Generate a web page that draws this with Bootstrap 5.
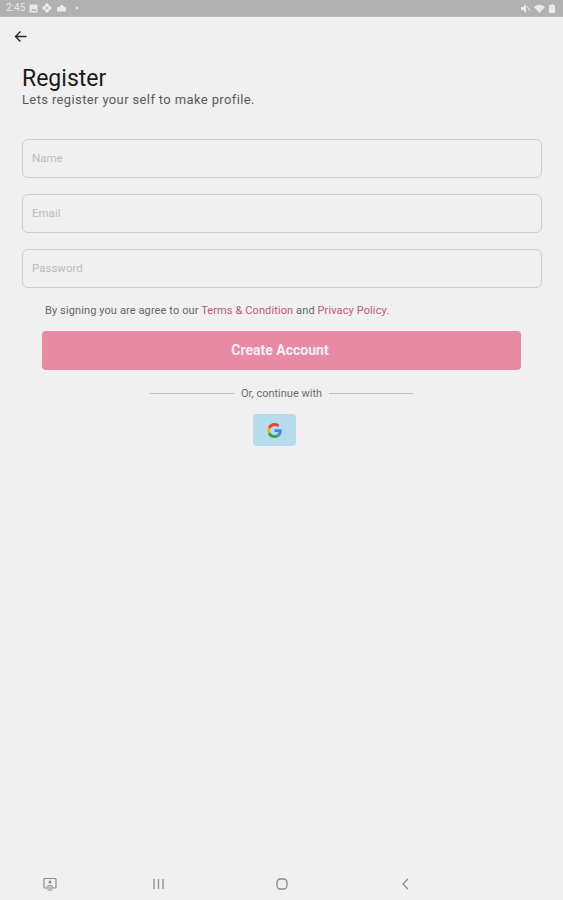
<!DOCTYPE html>
<html lang="en">
<head>
    <meta charset="UTF-8">
    <meta name="viewport" content="width=device-width, initial-scale=1.0">
    <title>Register</title>
    <link href="https://cdn.jsdelivr.net/npm/bootstrap@5.3.0/dist/css/bootstrap.min.css" rel="stylesheet">
    <style>
        body { background: #f0f0f0; font-family: Roboto, "Liberation Sans", sans-serif; }
        .screen { height: 900px; overflow: hidden; }
        .status-strip { height: 17px; background: #b1b1b1; border-bottom: 1px solid #bdbdbd; padding: 0 8px 0 6px; color: #e9e9e9; font-size: 10px; line-height: 16px; }
        .back-row { height: 38px; padding: 13px 0 0 14px; }
        .page-title { font-size: 23px; font-weight: 400; line-height: 27px; color: #1b1b1b; margin: 10px 0 0 22px; }
        .page-sub { font-size: 13px; line-height: 15px; color: #5a5a5a; margin: 0 0 0 22px; letter-spacing: .37px; }
        .fields { margin: 32px 21px 0 22px; gap: 16px; }
        .field-input { height: 39px; background: #f0f0f0; border: 1.5px solid #cdcdcd; border-radius: 6px; font-size: 11.5px; padding: 0 9px 2px; color: #333; }
        .field-input::placeholder { color: #bcbcbc; }
        .field-input:focus { background: #f0f0f0; border-color: #cdcdcd; box-shadow: none; }
        .terms-line { font-size: 11px; line-height: 14px; color: #666; margin: 16px 0 0 45px; letter-spacing: .11px; }
        .terms-line a { color: #c2557c; text-decoration: none; }
        .create-btn { display: block; width: 479px; height: 39px; margin: 13px 0 0 42px; background: #e98aa5; border: 0; border-radius: 4px; color: #f7f1f3; font-size: 14px; font-weight: 700; padding: 0 3px 0 0; }
        .create-btn:hover { background: #e98aa5; color: #f7f1f3; }
        .or-row { margin: 17px 0 0 150px; width: 263px; height: 14px; gap: 7px; font-size: 11px; color: #6e6e6e; }
        .or-line { flex: 1; height: 1px; background: #c0c0c0; position: relative; top: -1px; }
        .google-btn { width: 43px; height: 32px; margin: 13px 0 0 253px; background: #b5dbec; border: 0; border-radius: 4px; padding: 0; }
        .google-btn:hover { background: #b5dbec; }
        .sys-nav { height: 32px; margin-top: auto; position: relative; }
        .sys-nav svg { position: absolute; top: 9px; }
    </style>
</head>
<body>

<div class="screen d-flex flex-column">
    <div class="status-strip d-flex align-items-center justify-content-between">
        <div class="d-flex align-items-center gap-1">
            <span>2:45</span>
            <svg width="9" height="9" viewBox="0 0 9 9"><rect x=".5" y=".5" width="8" height="8" rx="1" fill="#e9e9e9"/><path d="M2 7l2-2.5 1.500 1.500L6.500 4.500 7.500 7z" fill="#b1b1b1"/></svg>
            <svg width="10" height="10" viewBox="0 0 10 10" fill="#e9e9e9"><circle cx="5" cy="2.300" r="2"/><circle cx="2.300" cy="5" r="2"/><circle cx="7.700" cy="5" r="2"/><circle cx="5" cy="7.700" r="2"/></svg>
            <svg width="11" height="8" viewBox="0 0 11 8" fill="#e9e9e9"><path d="M1 7.500V4q0-1 1-1h1.500L5 1h2l1 2h1q1 0 1 1v3.500z"/></svg>
            <svg class="ms-1" width="4" height="4" viewBox="0 0 4 4"><circle cx="2" cy="2" r="1.300" fill="#e9e9e9"/></svg>
        </div>
        <div class="d-flex align-items-center gap-1">
            <svg width="9" height="9" viewBox="0 0 9 9" fill="#e9e9e9"><path d="M0 3h2l3-3v9L2 6H0z"/><path d="M6 2l3 5" stroke="#e9e9e9"/></svg>
            <svg width="11" height="9" viewBox="0 0 11 9" fill="#e9e9e9"><path d="M0 3q5.500-5 11 0L5.500 9z"/></svg>
            <svg width="6" height="9" viewBox="0 0 6 9" fill="#e9e9e9"><path d="M2 0h2v1h2v8H0V1h2z"/></svg>
        </div>
    </div>

    <div class="back-row">
        <svg class="d-block" width="13" height="13" viewBox="0 0 13 13" fill="none" stroke="#222" stroke-width="1.400"><path d="M12.500 6.500H1.500M6.500 1.500l-5 5 5 5"/></svg>
    </div>

    <h1 class="page-title">Register</h1>
    <p class="page-sub">Lets register your self to make profile.</p>

    <form class="fields d-flex flex-column">
        <input class="form-control field-input" type="text" placeholder="Name">
        <input class="form-control field-input" type="email" placeholder="Email">
        <input class="form-control field-input" type="password" placeholder="Password">
    </form>

    <p class="terms-line mb-0">By signing you are agree to our <a href="#">Terms &amp; Condition</a> and <a href="#">Privacy Policy.</a></p>

    <button class="btn create-btn" type="button">Create Account</button>

    <div class="or-row d-flex align-items-center">
        <span class="or-line"></span>
        <span>Or, continue with</span>
        <span class="or-line"></span>
    </div>

    <button class="btn google-btn d-flex align-items-center justify-content-center" type="button" aria-label="Google">
        <svg width="15" height="15" viewBox="0 0 48 48">
            <path fill="#ea4335" d="M24 9.500c3.500 0 6.700 1.200 9.200 3.600l6.900-6.900C35.900 2.400 30.500 0 24 0 14.600 0 6.500 5.400 2.600 13.200l8 6.200C12.500 13.700 17.800 9.500 24 9.500z"/>
            <path fill="#4285f4" d="M47 24.500c0-1.600-.1-3.100-.4-4.500H24v9h12.900c-.6 3-2.200 5.500-4.700 7.200l7.700 6C44.400 38 47 31.800 47 24.500z"/>
            <path fill="#fbbc05" d="M10.600 28.600c-.5-1.400-.8-3-.8-4.600s.3-3.200.8-4.600l-8-6.200C.9 16.500 0 20.100 0 24s.9 7.500 2.600 10.800z"/>
            <path fill="#34a853" d="M24 48c6.500 0 11.900-2.100 15.900-5.800l-7.700-6c-2.100 1.400-4.900 2.300-8.200 2.300-6.200 0-11.500-4.200-13.400-9.900l-8 6.200C6.500 42.600 14.600 48 24 48z"/>
        </svg>
    </button>

    <div class="sys-nav">
        <svg style="left:43px" width="14" height="14" viewBox="0 0 14 14" fill="none" stroke="#8a8a8a" stroke-width="1.200"><rect x="1" y="1.500" width="12" height="9.500" rx="1"/><circle cx="7" cy="5" r="1.500" fill="#8a8a8a" stroke="none"/><path d="M4.500 10c.5-2 4.500-2 5 0M4.500 13h5"/></svg>
        <svg style="left:152px" width="13" height="14" viewBox="0 0 13 14" fill="none" stroke="#8a8a8a" stroke-width="1.300"><path d="M2 2v10M6.500 2v10M11 2v10"/></svg>
        <svg style="left:275px" width="14" height="14" viewBox="0 0 14 14" fill="none" stroke="#8a8a8a" stroke-width="1.300"><rect x="2" y="2" width="10" height="10" rx="3.500"/></svg>
        <svg style="left:399px" width="12" height="14" viewBox="0 0 12 14" fill="none" stroke="#8a8a8a" stroke-width="1.300"><path d="M9 2L4 7l5 5"/></svg>
    </div>
</div>

<script src="https://cdn.jsdelivr.net/npm/bootstrap@5.3.0/dist/js/bootstrap.bundle.min.js"></script>
</body>
</html>
